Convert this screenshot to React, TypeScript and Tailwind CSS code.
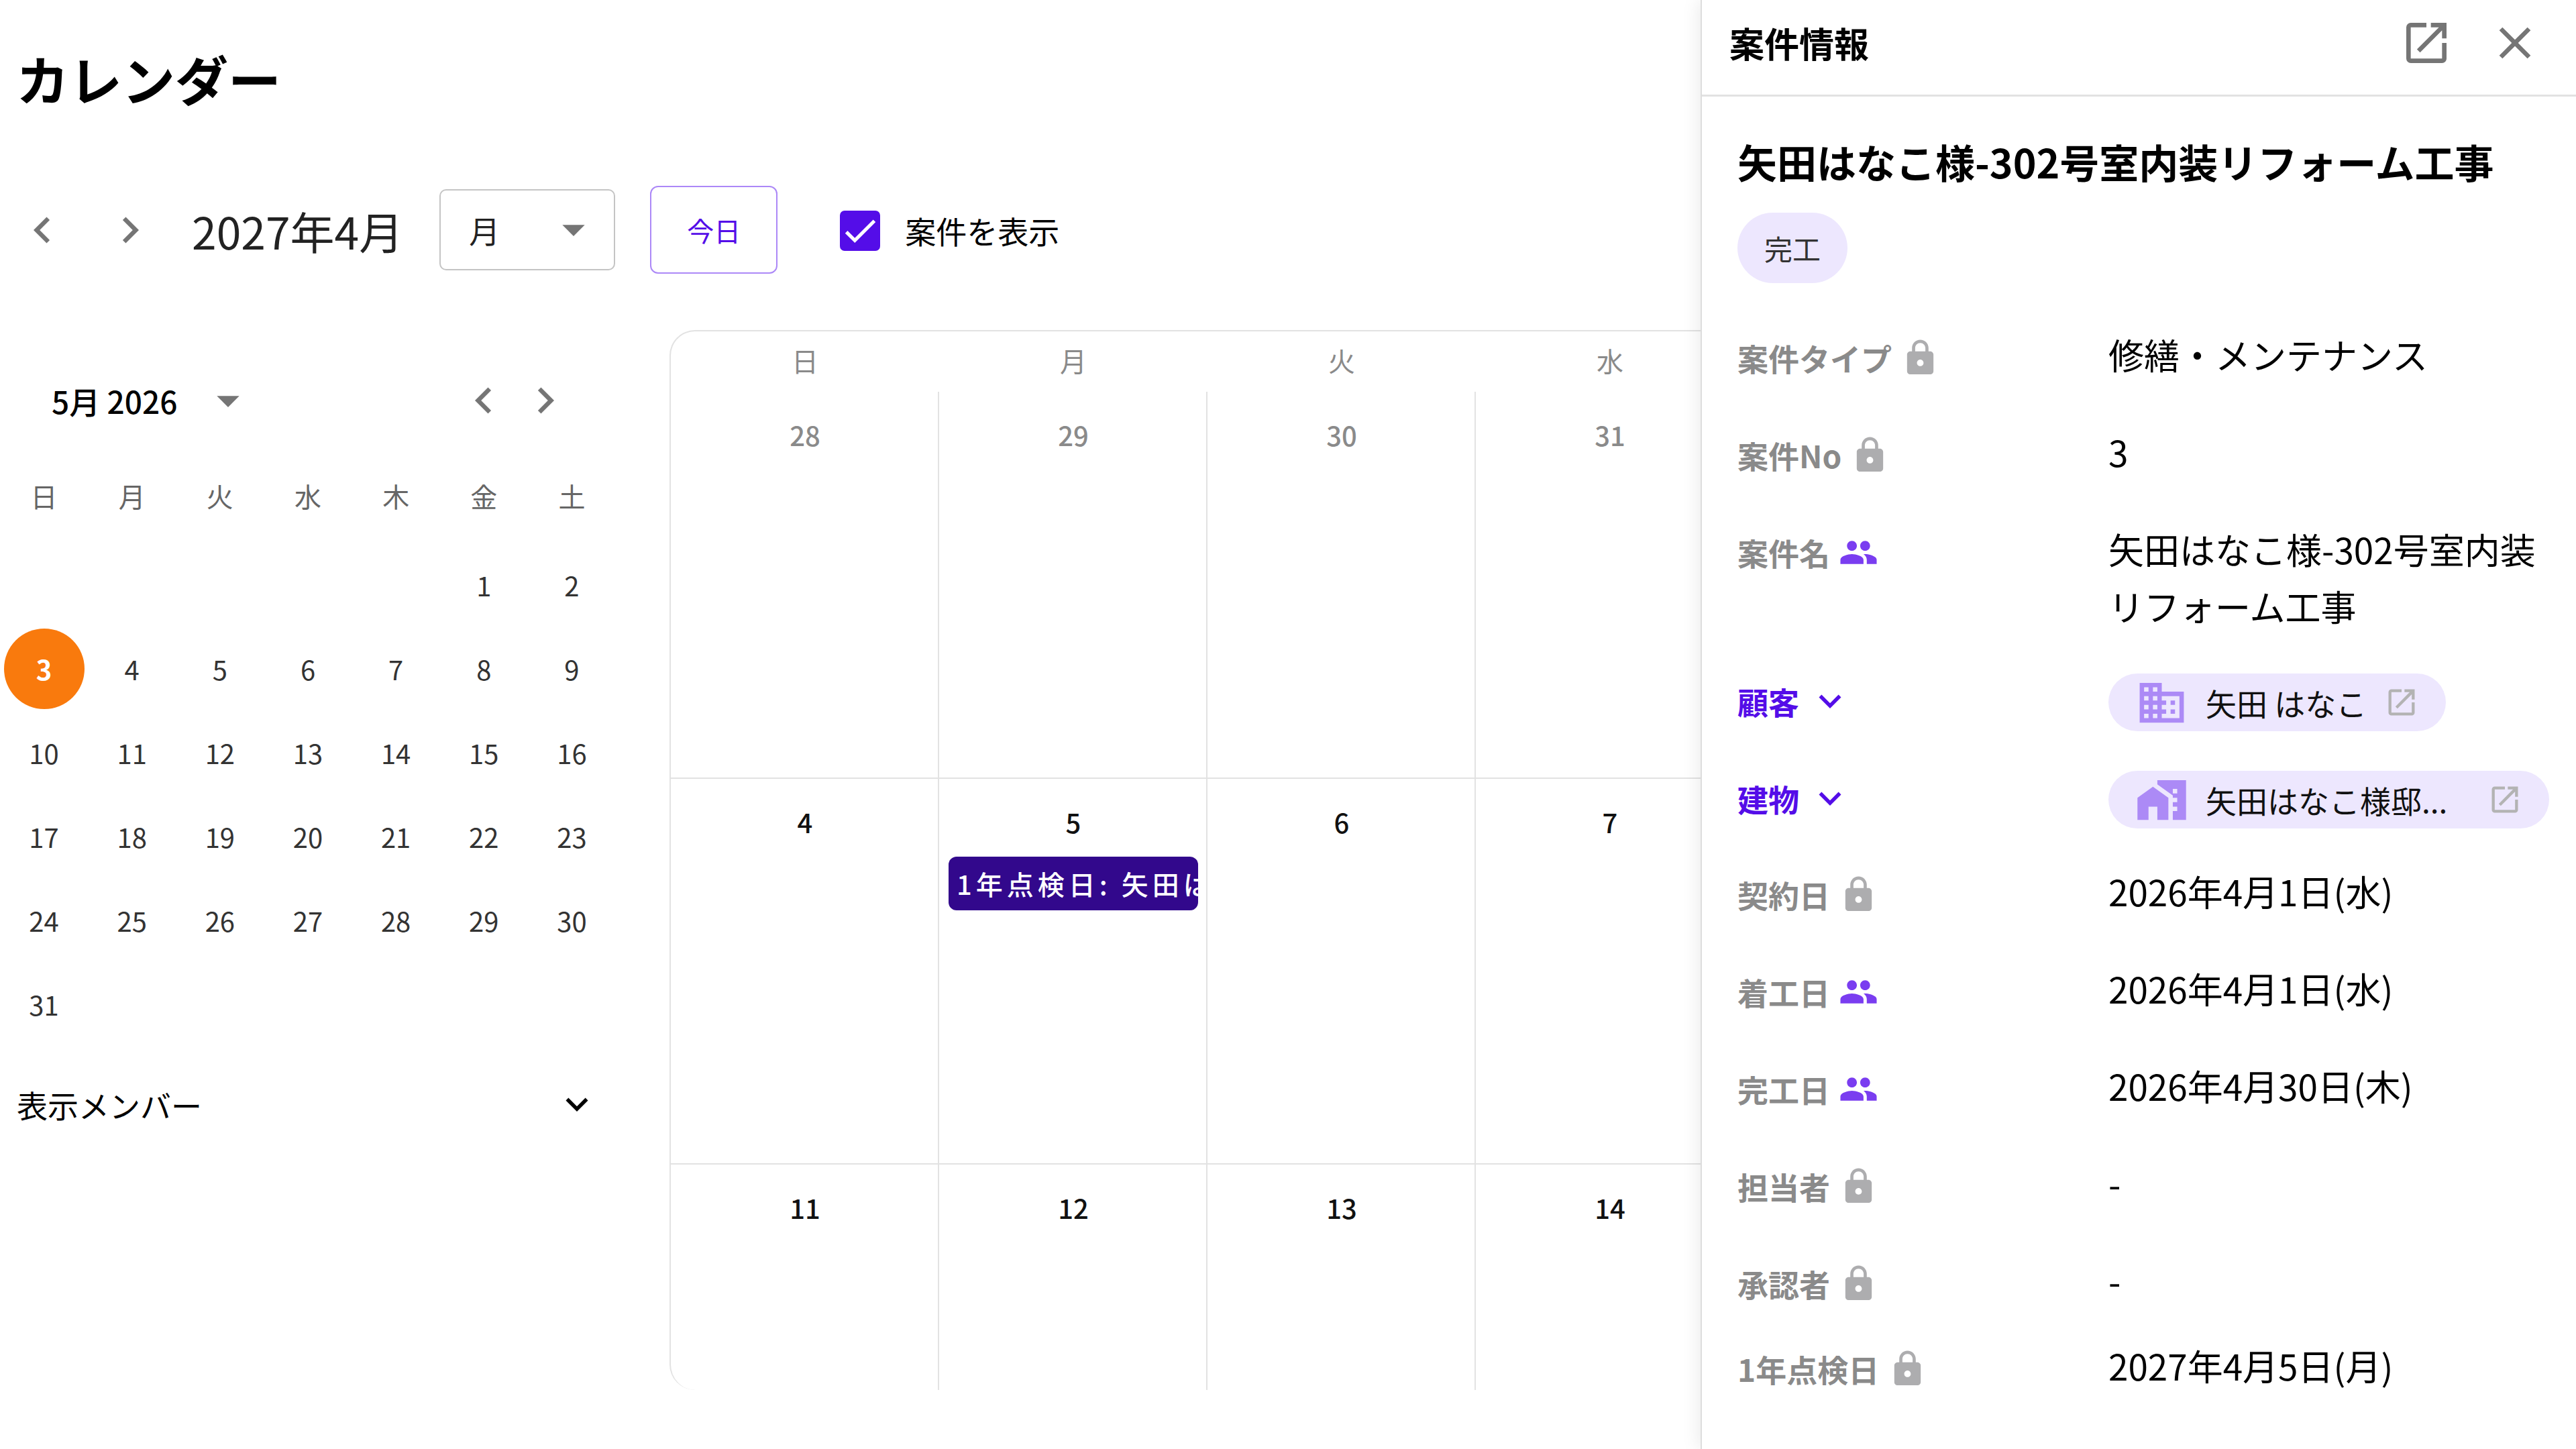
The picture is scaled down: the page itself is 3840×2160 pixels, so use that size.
import type { ReactNode } from "react";
import {
  MdArrowDropDown,
  MdCheck,
  MdChevronLeft,
  MdChevronRight,
  MdClose,
  MdDomain,
  MdExpandMore,
  MdHomeWork,
  MdLock,
  MdOpenInNew,
  MdPeople
} from "react-icons/md";

const weekdays = ["日", "月", "火", "水", "木", "金", "土"];

const miniDays = [
  ...Array.from({ length: 5 }, () => null),
  ...Array.from({ length: 31 }, (_, i) => i + 1)
];

type Day = { day: number; outside?: boolean; event?: string };

// Days that stay in view while the project panel is open
const weeks: Day[][] = [
  [
    { day: 28, outside: true },
    { day: 29, outside: true },
    { day: 30, outside: true },
    { day: 31, outside: true }
  ],
  [
    { day: 4 },
    { day: 5, event: "1年点検日: 矢田はなこ様" },
    { day: 6 },
    { day: 7 }
  ],
  [{ day: 11 }, { day: 12 }, { day: 13 }, { day: 14 }]
];

function Toolbar() {
  return (
    <div className="mt-[120px] flex items-center pl-6">
      <div className="flex items-center gap-[53px]">
        <button type="button" aria-label="前の月" className="text-[#757575]">
          <MdChevronLeft className="size-[78px]" />
        </button>
        <button type="button" aria-label="次の月" className="text-[#757575]">
          <MdChevronRight className="size-[78px]" />
        </button>
        <h2 className="text-[66px] leading-[80px] whitespace-nowrap text-[#222222]">2027年4月</h2>
      </div>
      <div className="relative ml-[54px]">
        <select
          aria-label="表示単位"
          className="h-[121px] w-[262px] appearance-none rounded-[10px] border-2 border-[#c4c4c4] bg-white pl-[42px] text-[46px] text-[#222222]"
        >
          <option>月</option>
          <option>週</option>
          <option>日</option>
        </select>
        <MdArrowDropDown className="pointer-events-none absolute top-5 right-[22px] size-20 text-[#757575]" />
      </div>
      <button
        type="button"
        className="ml-[52px] h-[131px] w-[190px] rounded-[12px] border-2 border-[#ac88f7] text-[40px] text-[#540de8]"
      >
        今日
      </button>
      <label className="ml-[92px] flex items-center gap-[38px] text-[46px] leading-[60px] text-black">
        <span className="relative grid size-[60px] place-items-center">
          <input
            type="checkbox"
            defaultChecked
            className="col-start-1 row-start-1 size-[60px] appearance-none rounded-[7px] bg-[#540de8]"
          />
          <MdCheck className="pointer-events-none col-start-1 row-start-1 size-[62px] text-white" />
        </span>
        案件を表示
      </label>
    </div>
  );
}

function MiniCalendar() {
  return (
    <aside className="w-[998px] shrink-0 pt-[65px]">
      <div className="w-[918px]">
        <div className="flex items-center pr-[66px] pl-[77px]">
          <span className="text-[46px] leading-[60px] font-medium text-black">5月 2026</span>
          <button type="button" aria-label="年を選択" className="ml-9 text-[#757575]">
            <MdArrowDropDown className="size-20" />
          </button>
          <div className="ml-auto flex gap-[14px] text-[#757575]">
            <button type="button" aria-label="前の月">
              <MdChevronLeft className="size-[78px]" />
            </button>
            <button type="button" aria-label="次の月">
              <MdChevronRight className="size-[78px]" />
            </button>
          </div>
        </div>
        <div className="mt-8 grid h-[140px] grid-cols-7 items-center text-center text-[40px] leading-[60px] text-[#666666]">
          {weekdays.map((day) => (
            <span key={day}>{day}</span>
          ))}
        </div>
        <div className="grid auto-rows-[125px] grid-cols-7 place-items-center text-[40px] text-[#333333]">
          {miniDays.map((day, i) =>
            day === null ? (
              <span key={i} />
            ) : (
              <button
                key={i}
                type="button"
                className={
                  day === 3
                    ? "size-[120px] rounded-full bg-[#f97a0d] font-bold text-white"
                    : "size-[120px] rounded-full"
                }
              >
                {day}
              </button>
            )
          )}
        </div>
        <button
          type="button"
          className="mt-[47px] flex h-20 w-full items-center justify-between px-[25px] text-[46px] text-black"
        >
          表示メンバー
          <MdExpandMore className="size-[66px]" />
        </button>
      </div>
    </aside>
  );
}

function MonthCalendar() {
  return (
    <div className="w-[1602px] shrink-0 overflow-hidden rounded-l-[38px] border-2 border-r-0 border-b-0 border-[#e2e2e2]">
      <div className="grid h-[90px] grid-cols-4 items-center pb-1 text-center text-[40px] leading-[60px] text-[#8a8a8a]">
        {weekdays.slice(0, 4).map((day) => (
          <span key={day}>{day}</span>
        ))}
      </div>
      {weeks.map((week, w) => (
        <div
          key={w}
          className={
            w === 0
              ? "grid h-[575px] grid-cols-4"
              : w === 1
                ? "grid h-[575px] grid-cols-4 border-t-2 border-[#e2e2e2]"
                : "grid h-[338px] grid-cols-4 border-t-2 border-[#e2e2e2]"
          }
        >
          {week.map(({ day, outside, event }) => (
            <div
              key={day}
              className="min-w-0 border-r-2 border-[#e2e2e2] pt-[34px] pr-3 pl-[14px]"
            >
              <p
                className={
                  outside
                    ? "text-center text-[40px] leading-[60px] font-medium text-[#8a8a8a]"
                    : "text-center text-[40px] leading-[60px] font-medium text-[#111111]"
                }
              >
                {day}
              </p>
              {event ? (
                <button
                  type="button"
                  className="mt-[22px] block h-20 w-full overflow-hidden rounded-[12px] bg-[#32088c] px-3 text-left text-[40px] font-medium tracking-[6px] whitespace-nowrap text-white"
                >
                  {event}
                </button>
              ) : null}
            </div>
          ))}
        </div>
      ))}
    </div>
  );
}

type FieldProps = {
  label: string;
  icon: "lock" | "people";
  children: ReactNode;
};

function Field({ label, icon, children }: FieldProps) {
  return (
    <div className="grid min-h-[145px] grid-cols-[553px_1fr] items-start">
      <dt className="flex items-center gap-[13px] pt-[25px] text-[46px] leading-[85px] font-bold text-[#8a8a8a]">
        {label}
        {icon === "lock" ? (
          <MdLock className="size-[59px] text-[#adadaf]" />
        ) : (
          <MdPeople className="size-[59px] text-[#7a3df0]" />
        )}
      </dt>
      <dd className="pt-5 pb-[30px] text-[53px] leading-[85px] text-black">{children}</dd>
    </div>
  );
}

type LinkFieldProps = {
  label: string;
  icon: ReactNode;
  text: string;
  wide?: boolean;
};

function LinkField({ label, icon, text, wide }: LinkFieldProps) {
  return (
    <div className="grid min-h-[145px] grid-cols-[553px_1fr] items-start pt-7">
      <dt>
        <button
          type="button"
          className="flex items-center gap-[13px] text-[46px] leading-[82px] font-bold text-[#540de8]"
        >
          {label}
          <MdExpandMore className="size-[66px]" />
        </button>
      </dt>
      <dd>
        <a
          href="#"
          className={
            wide
              ? "flex h-[86px] w-full items-center gap-[26px] rounded-full bg-[#ede7fe] px-10"
              : "inline-flex h-[86px] items-center gap-[26px] rounded-full bg-[#ede7fe] px-10"
          }
        >
          <span className="text-[#ac8af6]">{icon}</span>
          <span className="min-w-0 flex-1 text-[46px] leading-[60px] whitespace-nowrap text-[#111111]">
            {text}
          </span>
          <MdOpenInNew className="size-[52px] shrink-0 text-[#b3b3b3]" />
        </a>
      </dd>
    </div>
  );
}

function ProjectPanel() {
  return (
    <section className="relative z-10 w-[1305px] shrink-0 border-l-2 border-[#dddddd] bg-white shadow-[-4px_0_24px_rgba(0,0,0,0.08)]">
      <header className="flex h-[144px] items-center border-b-3 border-[#e2e2e2] pr-[51px] pb-[14px] pl-[41px]">
        <h2 className="text-[52px] leading-[80px] font-bold text-black">案件情報</h2>
        <div className="ml-auto flex gap-[52px] text-[#757575]">
          <button type="button" aria-label="新しいタブで開く">
            <MdOpenInNew className="size-20" />
          </button>
          <button type="button" aria-label="閉じる">
            <MdClose className="size-20" />
          </button>
        </div>
      </header>
      <div className="pr-10 pl-[53px]">
        <h3 className="pt-[57px] text-[59px] leading-[80px] font-bold whitespace-nowrap text-black">
          矢田はなこ様-302号室内装リフォーム工事
        </h3>
        <span className="mt-9 inline-flex h-[105px] items-center rounded-full bg-[#ede7fe] px-10 text-[42px] leading-[60px] text-[#333333]">
          完工
        </span>
        <dl className="mt-11">
          <Field label="案件タイプ" icon="lock">
            修繕・メンテナンス
          </Field>
          <Field label="案件No" icon="lock">
            3
          </Field>
          <Field label="案件名" icon="people">
            矢田はなこ様-302号室内装リフォーム工事
          </Field>
          <LinkField label="顧客" icon={<MdDomain className="size-[79px]" />} text="矢田 はなこ" />
          <LinkField
            label="建物"
            icon={<MdHomeWork className="size-[79px]" />}
            text="矢田はなこ様邸..."
            wide
          />
          <Field label="契約日" icon="lock">
            2026年4月1日(水)
          </Field>
          <Field label="着工日" icon="people">
            2026年4月1日(水)
          </Field>
          <Field label="完工日" icon="people">
            2026年4月30日(木)
          </Field>
          <Field label="担当者" icon="lock">
            -
          </Field>
          <Field label="承認者" icon="lock">
            -
          </Field>
        </dl>
        <dl className="-mt-[18px]">
          <Field label="1年点検日" icon="lock">
            2027年4月5日(月)
          </Field>
        </dl>
      </div>
    </section>
  );
}

export default function App() {
  return (
    <div
      lang="ja"
      className="flex min-h-screen bg-white font-['Noto_Sans_CJK_JP',sans-serif]"
    >
      <main className="min-w-0 flex-1 overflow-hidden pt-[77px]">
        <h1 className="pl-6 text-[79px] leading-[80px] font-bold text-black">カレンダー</h1>
        <Toolbar />
        <div className="mt-[84px] flex items-start">
          <MiniCalendar />
          <MonthCalendar />
        </div>
      </main>
      <ProjectPanel />
    </div>
  );
}
